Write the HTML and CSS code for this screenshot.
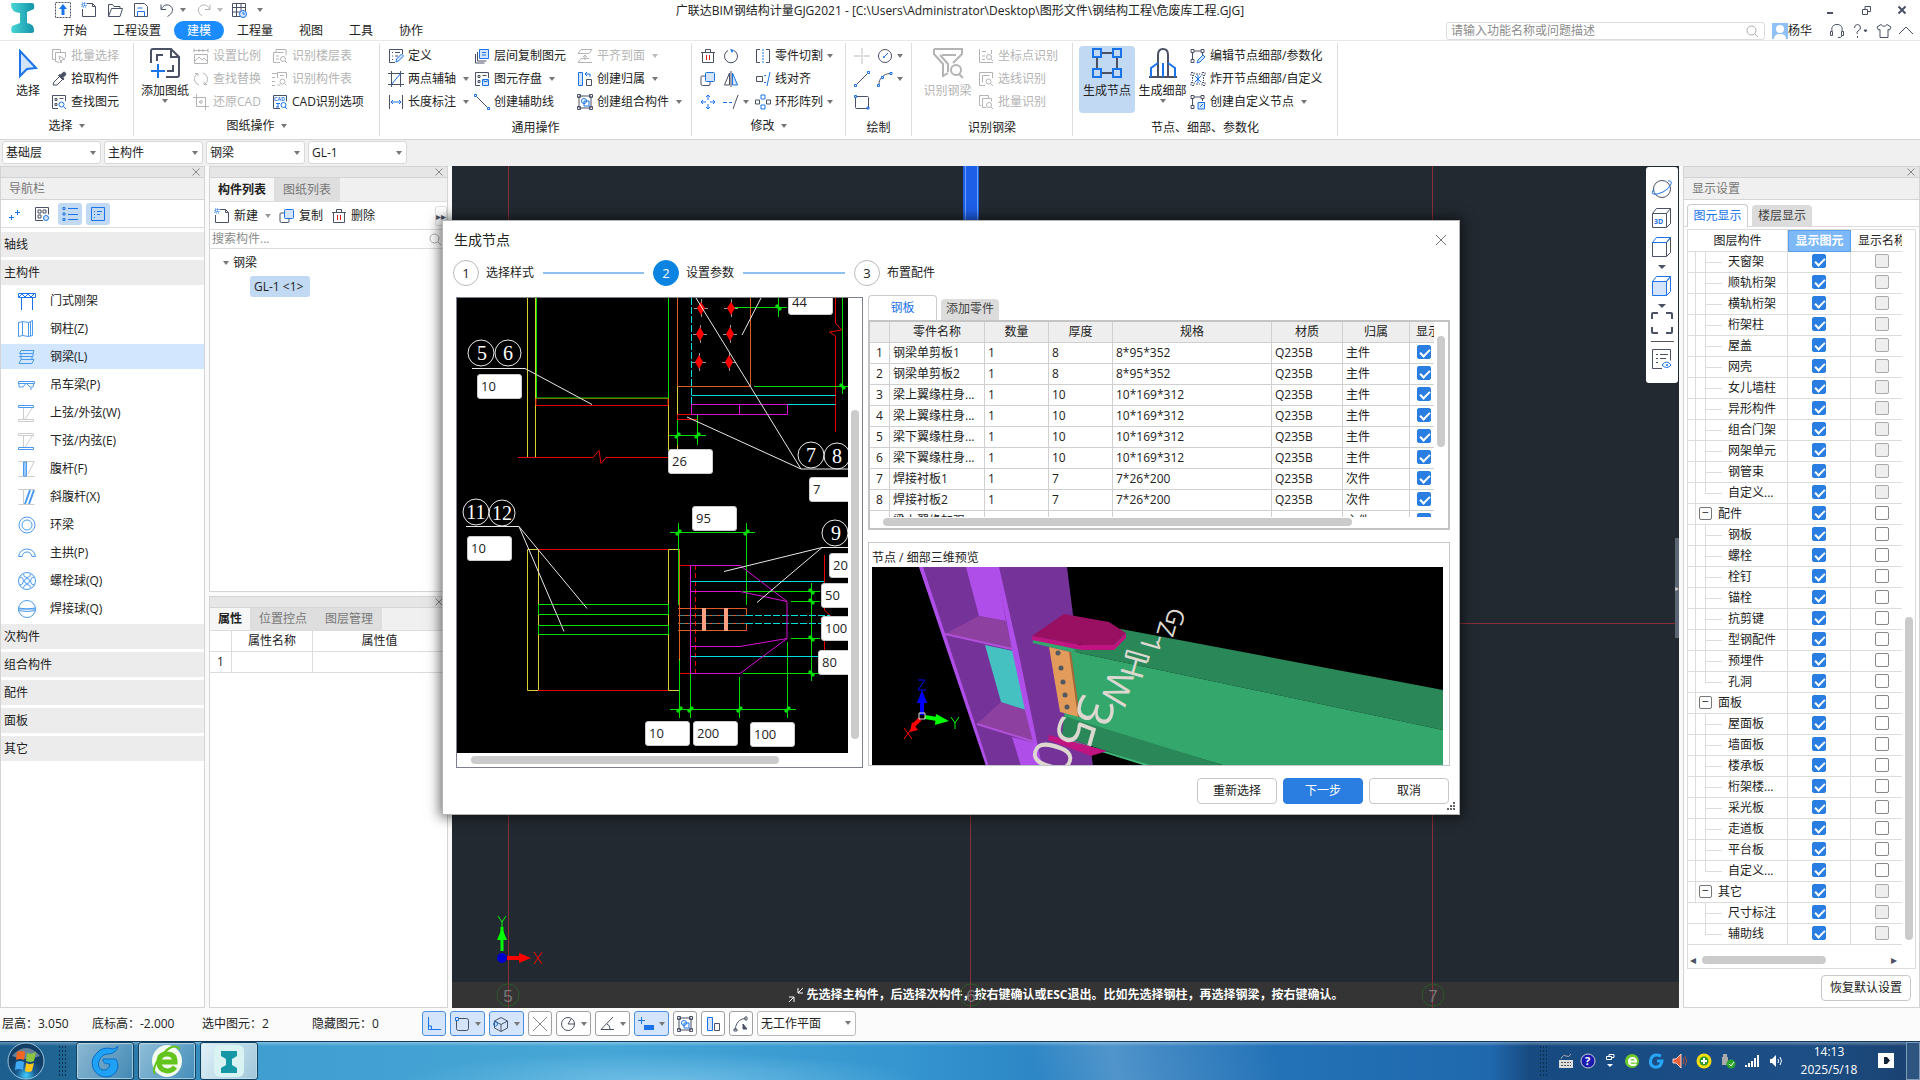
FILE: index.html
```html
<!DOCTYPE html>
<html lang="zh-CN">
<head>
<meta charset="utf-8">
<title>广联达BIM钢结构计量GJG2021</title>
<link rel="stylesheet" href="styles.css">
</head>
<body>
<svg class="sprite" aria-hidden="true">
<symbol id="up" viewBox="0 0 16 16"><path d="M.5.5h15v15H.5z" stroke-dasharray="2 1"/><path class="bs" d="M8 2l4 5H9.500v6h-3V7H4z"/></symbol>
<symbol id="new" viewBox="0 0 16 16"><path d="M6 1.500h5.500l3 3v10h-13V7"/><path d="M11.500 1.500v3h3"/><path class="b" d="M1 1h4v4H1zM1 3h4M3 1v4" stroke-dasharray="1 1"/></symbol>
<symbol id="open" viewBox="0 0 16 16"><path d="M1.500 14V2.500h4l1.500 2h6V7M1.500 14.500l3-8h11l-2.500 8z"/></symbol>
<symbol id="save" viewBox="0 0 16 16"><path d="M1.500 1.500h10l3 3v10h-13z"/><path class="b" d="M4.500 14.500v-5h7v5M4.500 6h5"/></symbol>
<symbol id="undo" viewBox="0 0 16 16"><path d="M2 2.500v5h5M2.500 7C4 3 9 1.500 12 4.500s1.500 7-3.500 10"/></symbol>
<symbol id="redo" viewBox="0 0 16 16"><path d="M14 2.500v5H9M13.500 7C12 3 7 1.500 4 4.500s-1.500 7 2 9.500"/></symbol>
<symbol id="grid" viewBox="0 0 16 16"><path d="M9 14.500H1.500v-13h13V9M1.500 5.500h13M1.500 10h8M5.500 1.500v13M10 1.500v8"/><circle class="b bf" cx="12" cy="12" r="3.500"/><path class="b" d="M12 10v2h2"/></symbol>
<symbol id="pointer" viewBox="0 0 32 32"><path class="b bf" stroke-width="2" d="M8 4l16 17-9 1-7 7z"/></symbol>
<symbol id="batch" viewBox="0 0 16 16"><path d="M4 11.500H1.500v-10h8V4M4.500 4.500h10v5M4.500 4.500v9l4 1"/><path d="M8 8l6 3-3 1-1 3z"/></symbol>
<symbol id="dropper" viewBox="0 0 16 16"><path d="M2 14l1-3 6-6 3 3-6 6z"/><path fill="currentColor" d="M7.500 4.500l4.500 4.500 1-1-1-1.500 2.500-2.500a1.800 1.800 0 0 0-2.500-2.500L9.500 4 8.500 3.500z"/></symbol>
<symbol id="find" viewBox="0 0 16 16"><path d="M7 14.500H1.500v-13h13V7M4 4.500h2v2H4zM4 9.500h2v2H4zM8.500 4.500h4"/><circle class="b" cx="10.500" cy="10.500" r="2.500"/><path class="b" d="M12.500 12.500l2.500 2.500"/></symbol>
<symbol id="sheet" viewBox="0 0 32 32"><g stroke-width="2"><path d="M2 16V4q0-2 2-2h18l8 8v18q0 2-2 2H17M22 2v8h8M8 14V8h6M24 18v6h-6"/><path class="b" d="M2 24h14M9 17v14"/></g></symbol>
<symbol id="ratio" viewBox="0 0 16 16"><path d="M1 .5v4M15 .5v4M1 2.500h14M6 1v3M10 1v3M1.500 6.500h13v9h-13zM2 13l4-4 3 3 2-2 3 3"/></symbol>
<symbol id="replace" viewBox="0 0 16 16"><path d="M6 14C1 12 0 6 4 3M2 2.500h3v3M10 2c5 2 6 8 2 11M14 13.500h-3v-3"/></symbol>
<symbol id="restore" viewBox="0 0 16 16"><path d="M3.500 0v12.500H16M0 3.500h12.500V16M9 6l-3 2 3 2M6 8h4"/></symbol>
<symbol id="tbl" viewBox="0 0 16 16"><path d="M4 4.500V1.500h10v6M1.500 4.500h10M1.500 4.500v10H8M4 8h3M4 11h3"/><circle cx="11" cy="11" r="2.500"/><path d="M13 13l2 2"/></symbol>
<symbol id="comp" viewBox="0 0 16 16"><path d="M0 2.500h5M0 6.500h3M0 10.500h3M0 14.500h3M5.500 7V1.500h9v6M5.500 14h3M8 4.500h4"/><circle cx="10.500" cy="10.500" r="2.500"/><path d="M12.500 12.500l2 2"/></symbol>
<symbol id="define" viewBox="0 0 16 16"><path d="M7 14.500H1.500v-13h13V6M4 4.500h1M7 4.500h5M4 8h1M7 8h3M4 11.500h1"/><path class="b bf" d="M8 14l.5-3 5-5 2 2-5 5z"/></symbol>
<symbol id="axis2" viewBox="0 0 16 16"><path d="M0 2.500h16M0 13.500h16M3.500 0v16M12.500 0v16"/><path class="b" d="M3.500 13.500l9-11"/></symbol>
<symbol id="length" viewBox="0 0 16 16"><path d="M1.500 1v14M14.500 1v14"/><path class="b" d="M3 8h10M5 6L3 8l2 2M11 6l2 2-2 2"/></symbol>
<symbol id="layer" viewBox="0 0 16 16"><path d="M3.500 4v9h9M1.500 6v9h9"/><path class="b bf" d="M5.500 1.500h9v9h-9zM8 4.500h4M8 7h4"/></symbol>
<symbol id="store" viewBox="0 0 16 16"><path d="M6 14.500H1.500v-13h13V7M4 4.500h2v2H4zM4 9.500h2v2H4zM8.500 4.500h4"/><path class="b bf" d="M8.500 8.500h6v6h-6zM10 8.500v2h3v-2"/></symbol>
<symbol id="aux" viewBox="0 0 16 16"><path class="b" d="M.5.5h2v2h-2zM13.500 13.500h2v2h-2z"/><path d="M3 3l10 10"/></symbol>
<symbol id="flat" viewBox="0 0 16 16"><path d="M4 1.500h11l-3 4H1zM1 14.500h14M1 14.500l3-4h8M8 12V7M6 9l2-2 2 2"/></symbol>
<symbol id="belong" viewBox="0 0 16 16"><path class="b bf" d="M1.500 1.500h4v13h-4z"/><path d="M9.500 8.500h5v6h-5z"/><path class="b" d="M13 6V3H8M10 1L8 3l2 2"/></symbol>
<symbol id="combo" viewBox="0 0 16 16"><path d="M2 2h12v12H2zM.5.5h3v3h-3zM12.500.5h3v3h-3zM.5 12.500h3v3h-3zM12.500 12.500h3v3h-3z"/><circle class="b" cx="7" cy="7" r="2.500"/><path class="b" d="M7 7h5v5H7z"/></symbol>
<symbol id="trash" viewBox="0 0 16 16"><path d="M1 4.500h14M5.500 4V1.500h5V4M2.500 5v9.500h11V5"/><path d="M6.500 7v5M9.500 7v5" stroke="#e02020"/></symbol>
<symbol id="rot" viewBox="0 0 16 16"><path d="M5 2.500A6.500 6.500 0 1 0 11 2.500"/><path class="bs" d="M7 1l4 1-2 3z"/></symbol>
<symbol id="copy" viewBox="0 0 16 16"><path d="M5 5H2q-1 0-1 1v7q0 1.500 1.500 1.500H9q1 0 1-1.500v-2"/><rect class="b bf" x="5.500" y="1.500" width="9" height="9" rx="1"/></symbol>
<symbol id="mirror" viewBox="0 0 16 16"><path class="b bf" d="M9.500 2l5 12h-5z"/><path d="M6.500 2l-5 12h5zM8 0v16"/></symbol>
<symbol id="move" viewBox="0 0 16 16"><path class="b" d="M8 1v5M8 10v5M1 8h5M10 8h5M6 3l2-2 2 2M6 13l2 2 2-2M3 6L1 8l2 2M13 6l2 2-2 2"/></symbol>
<symbol id="extend" viewBox="0 0 16 16"><path class="b" d="M0 8.500h4M6 8.500h3"/><path d="M15 1l-5 14"/></symbol>
<symbol id="cut" viewBox="0 0 16 16"><path d="M5 1.500H1.500v13H5M11 1.500h3.500v13H11"/><path class="b" d="M8 1v14" stroke-dasharray="2 1"/></symbol>
<symbol id="lalign" viewBox="0 0 16 16"><path d="M1.500 5.500h6v5h-6z"/><path class="b" d="M15 1l-3 14M9 4.500h2M9 11.500h2"/></symbol>
<symbol id="ring" viewBox="0 0 16 16"><path class="b" d="M6 1h4v4H6zM6 11h4v4H6z"/><path d="M.5 6h4v4h-4zM11.500 6h4v4h-4z"/></symbol>
<symbol id="point" viewBox="0 0 16 16"><path d="M8 0v6M8 10v6M0 8h6M10 8h6" stroke="#bbb"/><path d="M8 7v2" stroke="#888"/></symbol>
<symbol id="circ" viewBox="0 0 16 16"><circle cx="8" cy="8" r="6.500"/><path class="b" d="M7 9l4-4"/><circle class="bs" cx="7" cy="9" r="1"/></symbol>
<symbol id="line" viewBox="0 0 16 16"><path d="M3 13L13 3"/><path class="b" d="M.5 13.500h2v2h-2zM13.500.5h2v2h-2z"/></symbol>
<symbol id="arc" viewBox="0 0 16 16"><path d="M2 13C2 8 6 3 13 2.500"/><path class="b" d="M.5 13.500h2v2h-2zM4.500 5.500h2v2h-2zM13 1.500h2v2h-2z"/></symbol>
<symbol id="rect" viewBox="0 0 16 16"><rect x="1.500" y="2.500" width="13" height="12" rx="1"/><path class="b" d="M.5 1.500h2v2h-2zM13 13h2v2h-2z"/></symbol>
<symbol id="funnel" viewBox="0 0 32 32"><g stroke-width="2"><path d="M2 2h28v5l-9 9M2 2v5l9 10v12l5-3M8 8l8 9v8M10 8h14"/><circle cx="24" cy="23" r="5"/><path d="M27 27l4 4"/></g></symbol>
<symbol id="coord" viewBox="0 0 16 16"><path d="M1.500 1v13.500H15M4 3.500h4M4 8h3M4 11.500h3M13.500 2v4"/><circle cx="11" cy="9" r="2.500"/><path d="M13 11l2 2"/></symbol>
<symbol id="lsel" viewBox="0 0 16 16"><path d="M7 14.500H1.500v-13h13V7M4.500 11.500v-7h7"/><circle cx="10.500" cy="10.500" r="2.500"/><path d="M12.500 12.500l2.500 2.500"/></symbol>
<symbol id="brec" viewBox="0 0 16 16"><path d="M3 11.500H1.500v-10h9V4M4.500 4.500h9v3M4.500 4.500v9H8"/><circle cx="11" cy="11" r="2.500"/><path d="M13 13l2 2"/></symbol>
<symbol id="node" viewBox="0 0 32 32"><g stroke-width="2"><path d="M11 6h10M11 26h10M6 11v10M26 11v10"/><path class="b" d="M2 2h8v8H2zM22 2h8v8h-8zM2 22h8v8H2zM22 22h8v8h-8z"/></g></symbol>
<symbol id="detail" viewBox="0 0 32 32"><g stroke-width="2"><path d="M11 29V8q0-6 5-6t5 6v21M2 30h28"/><path class="b" d="M4 30V21l7-5M28 30V21l-7-5M16 16v14"/></g></symbol>
<symbol id="enode" viewBox="0 0 16 16"><path d="M1 1.500h3v3H1zM11 1.500h3v3h-3zM1 11.500h3v3H1zM4 3h7M2.500 5v6M12.500 5v2"/><path class="b bf" d="M7 15l1-3 5-5 2 2-5 5z"/></symbol>
<symbol id="explode" viewBox="0 0 16 16"><path d="M1 1.500h3v3H1zM12 1.500h3v3h-3zM1 11.500h3v3H1zM12 11.500h3v3h-3zM6 3h4M6 13h4M2.500 6v4M13.500 6v4" stroke-dasharray="2 1"/><path class="b" d="M5 5l6 6M11 5l-6 6M8 4v8"/></symbol>
<symbol id="cnode" viewBox="0 0 16 16"><path d="M1 1.500h3v3H1zM11 1.500h3v3h-3zM1 11.500h3v3H1zM4 3h7M2.500 5v6M12.500 5v2"/><path class="b bf" d="M8 8.500h6.500V15H8zM10 13l3-3"/></symbol>
<symbol id="close" viewBox="0 0 16 16"><path d="M4.500 4.500l7 7M11.500 4.500l-7 7"/></symbol>
<symbol id="mag" viewBox="0 0 16 16"><circle cx="7.500" cy="7.500" r="4.500"/><path d="M11 11l3 3"/></symbol>
<symbol id="cube" viewBox="0 0 22 22"><path d="M1.500 6.500h14v14h-14zM15.500 20.500l4-4V1.500l-4 5"/><path class="b" d="M1.500 6.500l4-5h14l-4 5z"/></symbol>
</svg>

<header class="top">
  <div class="quick">
    <svg class="logo" viewBox="0 0 26 32"><defs><linearGradient id="lg" x2="1"><stop offset="0" stop-color="#49d6d6"/><stop offset="1" stop-color="#1292a8"/></linearGradient></defs><path fill="url(#lg)" d="M2 1h20q3 0 2 6l-7 3v11q8 1 7 9-1 1-3 1H3q-3-1-1-7l8-3V11Q1 10 1 3 1 1 2 1z"/></svg>
    <button aria-label="上传"><svg class="i"><use href="#up"/></svg></button>
    <button aria-label="新建文件"><svg class="i"><use href="#new"/></svg></button>
    <button aria-label="打开"><svg class="i"><use href="#open"/></svg></button>
    <button aria-label="保存"><svg class="i"><use href="#save"/></svg></button>
    <button class="dd" aria-label="撤销"><svg class="i"><use href="#undo"/></svg></button>
    <button class="dd off" aria-label="重做"><svg class="i"><use href="#redo"/></svg></button>
    <button class="dd last" aria-label="表格"><svg class="i"><use href="#grid"/></svg></button>
  </div>
  <h1>广联达BIM钢结构计量GJG2021 - [C:\Users\Administrator\Desktop\图形文件\钢结构工程\危废库工程.GJG]</h1>
  <div class="winbtns">
    <button aria-label="最小化"><svg class="i" viewBox="0 0 16 16"><path d="M5 11h6" stroke-width="2"/></svg></button>
    <button aria-label="还原"><svg class="i" viewBox="0 0 16 16"><path d="M4.500 7.500h5v5h-5zM7 7V4.500h5.500v5H10"/></svg></button>
    <button aria-label="关闭"><svg class="i" viewBox="0 0 16 16"><path d="M4.500 4.500l7 7M11.500 4.500l-7 7" stroke-width="2"/></svg></button>
  </div>
  <nav class="tabs"><button>开始</button><button>工程设置</button><button class="on">建模</button><button>工程量</button><button>视图</button><button>工具</button><button>协作</button></nav>
  <div class="user">
    <label class="search"><input type="text" aria-label="搜索功能" placeholder="请输入功能名称或问题描述"><svg class="i"><use href="#mag"/></svg></label>
    <svg class="avatar" viewBox="0 0 16 16"><rect width="16" height="16" fill="#8fc1f7"/><circle cx="8" cy="6" r="4" fill="#fff"/><path d="M2 16q0-5 6-5t6 5z" fill="#fff"/></svg><span>杨华</span>
    <svg class="i hs" viewBox="0 0 16 16"><path d="M3 8C2 3 5 1.500 8 1.500S14 3 13 8M1.500 8.500h2v4h-2zM12.500 8.500h2v4h-2zM13 13q-1 2-4 1.500"/></svg>
    <svg class="i hp" viewBox="0 0 16 16"><path d="M1.500 5Q1.500 1.500 4.500 1.500T7.500 5Q7 7 5 8t-.5 3M4.500 13v2"/><path fill="currentColor" d="M11 7h3l-1.500 2z"/></svg>
    <svg class="i sh" viewBox="0 0 16 16"><path d="M5 1.500L1 4l1.500 3L4 6.500v8h8v-8l1.500.5L15 4l-4-2.500Q8 5 5 1.500z"/></svg>
    <svg class="i" viewBox="0 0 16 16"><path d="M1 11l7-7 7 7"/></svg>
  </div>
</header>

<div class="ribbon">
  <section class="group g1"><div class="body">
    <button class="big"><svg class="ii"><use href="#pointer"/></svg>选择</button>
    <div class="col"><button class="tool off"><svg class="i"><use href="#batch"/></svg>批量选择</button><button class="tool"><svg class="i"><use href="#dropper"/></svg>拾取构件</button><button class="tool"><svg class="i"><use href="#find"/></svg>查找图元</button></div>
  </div><h2 class="dd">选择</h2></section>
  <section class="group g2"><div class="body">
    <button class="big more"><svg class="ii"><use href="#sheet"/></svg>添加图纸</button>
    <div class="col off"><button class="tool"><svg class="i"><use href="#ratio"/></svg>设置比例</button><button class="tool"><svg class="i"><use href="#replace"/></svg>查找替换</button><button class="tool"><svg class="i"><use href="#restore"/></svg>还原CAD</button></div>
    <div class="col"><button class="tool off"><svg class="i"><use href="#tbl"/></svg>识别楼层表</button><button class="tool off"><svg class="i"><use href="#comp"/></svg>识别构件表</button><button class="tool"><svg class="i" viewBox="0 0 16 16"><path d="M1.500 1.500h13v6M1.500 1.500v13H8"/><text class="tiny" x="2" y="7">CAD</text><path class="b" d="M4 9.500h4M6 9.500V13M4 13h3"/><circle class="b" cx="11.500" cy="11" r="2.500"/><path class="b" d="M13 13l2 2"/></svg>CAD识别选项</button></div>
  </div><h2 class="dd">图纸操作</h2></section>
  <section class="group g3"><div class="body">
    <div class="col"><button class="tool"><svg class="i"><use href="#define"/></svg>定义</button><button class="tool dd"><svg class="i"><use href="#axis2"/></svg>两点辅轴</button><button class="tool dd"><svg class="i"><use href="#length"/></svg>长度标注</button></div>
    <div class="col"><button class="tool"><svg class="i"><use href="#layer"/></svg>层间复制图元</button><button class="tool dd"><svg class="i"><use href="#store"/></svg>图元存盘</button><button class="tool"><svg class="i"><use href="#aux"/></svg>创建辅助线</button></div>
    <div class="col"><button class="tool dd off"><svg class="i"><use href="#flat"/></svg>平齐到面</button><button class="tool dd"><svg class="i"><use href="#belong"/></svg>创建归属</button><button class="tool dd"><svg class="i"><use href="#combo"/></svg>创建组合构件</button></div>
  </div><h2>通用操作</h2></section>
  <section class="group g4"><div class="body">
    <div class="col"><button class="tool" aria-label="删除"><svg class="i"><use href="#trash"/></svg></button><button class="tool" aria-label="复制"><svg class="i"><use href="#copy"/></svg></button><button class="tool" aria-label="移动"><svg class="i"><use href="#move"/></svg></button></div>
    <div class="col"><button class="tool" aria-label="旋转"><svg class="i"><use href="#rot"/></svg></button><button class="tool" aria-label="镜像"><svg class="i"><use href="#mirror"/></svg></button><button class="tool dd" aria-label="延伸"><svg class="i"><use href="#extend"/></svg></button></div>
    <div class="col"><button class="tool dd"><svg class="i"><use href="#cut"/></svg>零件切割</button><button class="tool"><svg class="i"><use href="#lalign"/></svg>线对齐</button><button class="tool dd"><svg class="i"><use href="#ring"/></svg>环形阵列</button></div>
  </div><h2 class="dd">修改</h2></section>
  <section class="group g5"><div class="body">
    <div class="col"><button class="tool" aria-label="点"><svg class="i"><use href="#point"/></svg></button><button class="tool" aria-label="直线"><svg class="i"><use href="#line"/></svg></button><button class="tool" aria-label="矩形"><svg class="i"><use href="#rect"/></svg></button></div>
    <div class="col"><button class="tool dd" aria-label="圆"><svg class="i"><use href="#circ"/></svg></button><button class="tool dd" aria-label="弧"><svg class="i"><use href="#arc"/></svg></button></div>
  </div><h2>绘制</h2></section>
  <section class="group g6"><div class="body off">
    <button class="big"><svg class="ii"><use href="#funnel"/></svg>识别钢梁</button>
    <div class="col"><button class="tool"><svg class="i"><use href="#coord"/></svg>坐标点识别</button><button class="tool"><svg class="i"><use href="#lsel"/></svg>选线识别</button><button class="tool"><svg class="i"><use href="#brec"/></svg>批量识别</button></div>
  </div><h2>识别钢梁</h2></section>
  <section class="group g7"><div class="body">
    <button class="big on"><svg class="ii"><use href="#node"/></svg>生成节点</button>
    <button class="big more"><svg class="ii"><use href="#detail"/></svg>生成细部</button>
    <div class="col"><button class="tool"><svg class="i"><use href="#enode"/></svg>编辑节点细部/参数化</button><button class="tool"><svg class="i"><use href="#explode"/></svg>炸开节点细部/自定义</button><button class="tool dd"><svg class="i"><use href="#cnode"/></svg>创建自定义节点</button></div>
  </div><h2>节点、细部、参数化</h2></section>
</div>

<div class="filters">
  <span class="pick"><select aria-label="楼层"><option>基础层</option></select></span>
  <span class="pick"><select aria-label="构件大类"><option>主构件</option></select></span>
  <span class="pick"><select aria-label="构件类型"><option>钢梁</option></select></span>
  <span class="pick"><select aria-label="构件"><option>GL-1</option></select></span>
</div>

<main class="work">
  <aside class="panel nav">
    <div class="grip"><svg class="i"><use href="#close"/></svg></div>
    <h3>导航栏</h3>
    <div class="navbar">
      <button aria-label="添加"><svg class="i" viewBox="0 0 16 16"><path class="b" d="M3 11.500h5M5.500 9v5M9 6.500h5M11.500 4v5"/></svg></button>
      <button aria-label="布局"><svg class="i" viewBox="0 0 16 16"><path d="M1.500 1.500h13v7M1.500 1.500v13H9M4 4h3v3H4zM9 4h3v3H9zM4 9h3v3H4z"/><circle class="b bf" cx="12" cy="12" r="2.500"/></svg></button>
      <button class="on" aria-label="列表"><svg class="i" viewBox="0 0 16 16"><path class="b" d="M1 1.500h2v2H1zM1 7h2v2H1zM1 12.500h2v2H1zM6 2.500h10M6 8.500h10M6 13.500h10"/></svg></button>
      <button class="on" aria-label="详情"><svg class="i" viewBox="0 0 16 16"><path class="b" d="M1.500 1.500h13v13h-13zM4 5.500h1M7 5.500h5M4 8.500h1M7 8.500h3M4 11.500h1"/></svg></button>
    </div>
    <ul class="types">
      <li class="cat">轴线</li><li class="cat">主构件</li>
      <li><svg class="n" viewBox="0 0 18 18"><path class="d" d="M.5 1.500h17v4H.5zM1 5l3-3 3 3 3-3 3 3 3-3M3.500 6v12M14.500 6v12"/></svg>门式刚架</li>
      <li><svg class="n" viewBox="0 0 18 18"><path d="M.5 2.500l4-1v14l-4 1zM4.500 1.500l6 1v14l-6-1M10.500 2.500l4-2v15l-4 1M12.500 2v14"/></svg>钢柱(Z)</li>
      <li class="on"><svg class="n" viewBox="0 0 18 18"><path d="M3 2.500h13l-1 3H1.500zM3 5.500v6M1 8.500h14V5M3 11.500l-2 4h13l2-4zM14 8.500v3"/></svg>钢梁(L)</li>
      <li><svg class="n" viewBox="0 0 18 18"><path d="M.5 5.500h16v2H.5zM1 7v4h4l3-4 4 4h3l1-4M12 13h2"/></svg>吊车梁(P)</li>
      <li><svg class="n" viewBox="0 0 18 18"><path class="g" d="M.5 15.500h15v2H.5zM5.500 3v12M7 15l8-12"/><path d="M.5 1.500h15v2H.5z"/></svg>上弦/外弦(W)</li>
      <li><svg class="n" viewBox="0 0 18 18"><path class="g" d="M.5 1.500h15v2H.5zM5.500 3v12M7 15l8-12"/><path d="M.5 15.500h15v2H.5z"/></svg>下弦/内弦(E)</li>
      <li><svg class="n" viewBox="0 0 18 18"><path class="g" d="M.5 1.500h16M.5 16.500h16M10 14l6-12"/><path fill="#9cc8fa" d="M5.500 2v14h3V2z"/></svg>腹杆(F)</li>
      <li><svg class="n" viewBox="0 0 18 18"><path class="g" d="M.5 1.500h16M.5 16.500h16M5.500 2v14"/><path d="M7 16l5-14M11 16l5-14" stroke-width="2"/></svg>斜腹杆(X)</li>
      <li><svg class="n" viewBox="0 0 18 18"><circle cx="9" cy="9" r="8"/><circle cx="9" cy="9" r="5"/></svg>环梁</li>
      <li><svg class="n" viewBox="0 0 18 18"><path d="M.5 12.500Q2 5 9 5t8.500 7.500H14Q13 8 9 8t-5 4.500z"/></svg>主拱(P)</li>
      <li><svg class="n" viewBox="0 0 18 18"><circle cx="9" cy="9" r="8.500"/><circle cx="9" cy="9" r="2.500"/><path d="M5.500 2a3.500 3.500 0 0 0 7 0M5.500 16a3.500 3.500 0 0 1 7 0M1.500 5a3 3 0 1 1 0 8M16.500 5a3 3 0 1 0 0 8"/></svg>螺栓球(Q)</li>
      <li><svg class="n" viewBox="0 0 18 18"><circle cx="9" cy="9" r="8.500"/><path d="M.5 8q8.500 2 17 0M.5 10.500q8.500 2 17 0M0 9h18"/></svg>焊接球(Q)</li>
      <li class="cat">次构件</li><li class="cat">组合构件</li><li class="cat">配件</li><li class="cat">面板</li><li class="cat">其它</li>
    </ul>
  </aside>

  <div class="side">
    <section class="panel list">
      <div class="grip"><svg class="i"><use href="#close"/></svg></div>
      <div class="subtabs"><button class="on">构件列表</button><button>图纸列表</button></div>
      <div class="bar"><button class="tool dd"><svg class="i"><use href="#new"/></svg>新建</button><button class="tool"><svg class="i"><use href="#copy"/></svg>复制</button><button class="tool"><svg class="i"><use href="#trash"/></svg>删除</button><span class="over">▸▸</span></div>
      <label class="lookup"><input type="text" aria-label="搜索构件" placeholder="搜索构件..."><svg class="i"><use href="#mag"/></svg></label>
      <ul class="tree"><li><span class="parent">钢梁</span><ul><li><span class="chip">GL-1 &lt;1&gt;</span></li></ul></li></ul>
    </section>
    <section class="panel props">
      <div class="grip"><svg class="i"><use href="#close"/></svg></div>
      <div class="subtabs"><button class="on">属性</button><button>位置控点</button><button>图层管理</button></div>
      <table class="ptable"><thead><tr><th></th><th>属性名称</th><th>属性值</th></tr></thead><tbody><tr><td>1</td><td></td><td></td></tr></tbody></table>
    </section>
  </div>

  <section class="view">
    <p class="hint"><svg class="i" viewBox="0 0 16 16"><path d="M15 1l-5 5M10 1v5h5M1 15l5-5M1 10h5v5"/></svg>先选择主构件，后选择次构件，按右键确认或ESC退出。比如先选择钢柱，再选择钢梁，按右键确认。</p>
    <svg class="axes" viewBox="0 0 1227 842" preserveAspectRatio="xMinYMax slice">
      <path d="M56.500 0v842M518.500 0v842M980.500 0v842M0 457.500h1227" stroke="#8a2f3a"/>
      <path d="M511 0h16v60h-16z" fill="#1e5fe8"/><path d="M513.500 0v60M525.500 0v60" stroke="#6aa0ff"/>
      <g stroke="#2c5a2c"><circle cx="56" cy="829" r="11"/><circle cx="519" cy="829" r="11"/><circle cx="981" cy="829" r="11"/></g>
      <g class="num"><text x="56" y="836">5</text><text x="519" y="836">6</text><text x="981" y="836">7</text></g>
      <path d="M50 785v-24" stroke="#0f0" stroke-width="3"/><path d="M45 774l5-12 5 12z" fill="#0f0"/>
      <path d="M55 792h12" stroke="red" stroke-width="4"/><path d="M67 787l12 5-12 5z" fill="red"/>
      <circle cx="50" cy="792" r="5" fill="#00c"/>
      <path d="M46 750l4 6 4-6M50 756v6" stroke="#0f0"/><path d="M82 786l8 12M90 786l-8 12" stroke="red"/>
    </svg>
    <div class="strip">
      <svg viewBox="0 0 22 22"><circle cx="11" cy="11" r="8.500"/><path class="b" d="M17 3q4-1 3 3-2 5-8 8t-10 2q-2-1 1-5"/></svg>
      <svg viewBox="0 0 22 22"><path d="M1.500 6.500h14v14h-14zM1.500 6.500l4-5h14l-4 5M15.500 20.500l4-4v-15"/><text class="td" x="3" y="17">3D</text></svg>
      <svg><use href="#cube"/></svg><i></i>
      <svg class="blue"><use href="#cube"/></svg><i></i>
      <svg class="wide" viewBox="0 0 24 24"><path stroke-width="2" d="M2 8V3q0-1 1-1h5M16 2h5q1 0 1 1v5M22 16v5q0 1-1 1h-5M8 22H3q-1 0-1-1v-5"/></svg>
      <hr>
      <svg viewBox="0 0 22 22"><path d="M11 20.500H1.500v-19h18v11M5 6.500h2M9 6.500h8M5 10.500h2M9 10.500h6M5 14.500h2"/><path class="b" d="M11 17q5-6 9 0-4 5-9 0z"/><circle class="bs" cx="16" cy="17" r="1"/></svg>
    </div>
    <span class="split">▸</span>
  </section>

  <aside class="panel display">
    <div class="grip"><svg class="i"><use href="#close"/></svg></div>
    <h3>显示设置</h3>
    <div class="cards"><button class="on">图元显示</button><button>楼层显示</button></div>
    <div class="frame">
      <div class="clip">
      <table class="dtable">
        <thead><tr><th>图层构件</th><th class="hl">显示图元</th><th>显示名称</th></tr></thead>
        <tbody>
        <tr><td>天窗架</td><td><input type="checkbox" aria-label="天窗架 图元" checked></td><td><input type="checkbox" aria-label="天窗架 名称" disabled></td></tr>
        <tr><td>顺轨桁架</td><td><input type="checkbox" aria-label="顺轨桁架 图元" checked></td><td><input type="checkbox" aria-label="顺轨桁架 名称" disabled></td></tr>
        <tr><td>横轨桁架</td><td><input type="checkbox" aria-label="横轨桁架 图元" checked></td><td><input type="checkbox" aria-label="横轨桁架 名称" disabled></td></tr>
        <tr><td>桁架柱</td><td><input type="checkbox" aria-label="桁架柱 图元" checked></td><td><input type="checkbox" aria-label="桁架柱 名称" disabled></td></tr>
        <tr><td>屋盖</td><td><input type="checkbox" aria-label="屋盖 图元" checked></td><td><input type="checkbox" aria-label="屋盖 名称" disabled></td></tr>
        <tr><td>网壳</td><td><input type="checkbox" aria-label="网壳 图元" checked></td><td><input type="checkbox" aria-label="网壳 名称" disabled></td></tr>
        <tr><td>女儿墙柱</td><td><input type="checkbox" aria-label="女儿墙柱 图元" checked></td><td><input type="checkbox" aria-label="女儿墙柱 名称" disabled></td></tr>
        <tr><td>异形构件</td><td><input type="checkbox" aria-label="异形构件 图元" checked></td><td><input type="checkbox" aria-label="异形构件 名称" disabled></td></tr>
        <tr><td>组合门架</td><td><input type="checkbox" aria-label="组合门架 图元" checked></td><td><input type="checkbox" aria-label="组合门架 名称" disabled></td></tr>
        <tr><td>网架单元</td><td><input type="checkbox" aria-label="网架单元 图元" checked></td><td><input type="checkbox" aria-label="网架单元 名称" disabled></td></tr>
        <tr><td>钢管束</td><td><input type="checkbox" aria-label="钢管束 图元" checked></td><td><input type="checkbox" aria-label="钢管束 名称" disabled></td></tr>
        <tr class="last"><td>自定义...</td><td><input type="checkbox" aria-label="自定义构件 图元" checked></td><td><input type="checkbox" aria-label="自定义构件 名称" disabled></td></tr>
        <tr class="head"><td><button>−</button>配件</td><td><input type="checkbox" aria-label="配件 图元" checked></td><td><input type="checkbox" aria-label="配件 名称"></td></tr>
        <tr><td>钢板</td><td><input type="checkbox" aria-label="钢板 图元" checked></td><td><input type="checkbox" aria-label="钢板 名称"></td></tr>
        <tr><td>螺栓</td><td><input type="checkbox" aria-label="螺栓 图元" checked></td><td><input type="checkbox" aria-label="螺栓 名称"></td></tr>
        <tr><td>栓钉</td><td><input type="checkbox" aria-label="栓钉 图元" checked></td><td><input type="checkbox" aria-label="栓钉 名称"></td></tr>
        <tr><td>锚栓</td><td><input type="checkbox" aria-label="锚栓 图元" checked></td><td><input type="checkbox" aria-label="锚栓 名称"></td></tr>
        <tr><td>抗剪键</td><td><input type="checkbox" aria-label="抗剪键 图元" checked></td><td><input type="checkbox" aria-label="抗剪键 名称"></td></tr>
        <tr><td>型钢配件</td><td><input type="checkbox" aria-label="型钢配件 图元" checked></td><td><input type="checkbox" aria-label="型钢配件 名称"></td></tr>
        <tr><td>预埋件</td><td><input type="checkbox" aria-label="预埋件 图元" checked></td><td><input type="checkbox" aria-label="预埋件 名称"></td></tr>
        <tr class="last"><td>孔洞</td><td><input type="checkbox" aria-label="孔洞 图元" checked></td><td><input type="checkbox" aria-label="孔洞 名称"></td></tr>
        <tr class="head"><td><button>−</button>面板</td><td><input type="checkbox" aria-label="面板 图元" checked></td><td><input type="checkbox" aria-label="面板 名称"></td></tr>
        <tr><td>屋面板</td><td><input type="checkbox" aria-label="屋面板 图元" checked></td><td><input type="checkbox" aria-label="屋面板 名称"></td></tr>
        <tr><td>墙面板</td><td><input type="checkbox" aria-label="墙面板 图元" checked></td><td><input type="checkbox" aria-label="墙面板 名称"></td></tr>
        <tr><td>楼承板</td><td><input type="checkbox" aria-label="楼承板 图元" checked></td><td><input type="checkbox" aria-label="楼承板 名称"></td></tr>
        <tr><td>桁架楼...</td><td><input type="checkbox" aria-label="桁架楼承板 图元" checked></td><td><input type="checkbox" aria-label="桁架楼承板 名称"></td></tr>
        <tr><td>采光板</td><td><input type="checkbox" aria-label="采光板 图元" checked></td><td><input type="checkbox" aria-label="采光板 名称"></td></tr>
        <tr><td>走道板</td><td><input type="checkbox" aria-label="走道板 图元" checked></td><td><input type="checkbox" aria-label="走道板 名称"></td></tr>
        <tr><td>平台板</td><td><input type="checkbox" aria-label="平台板 图元" checked></td><td><input type="checkbox" aria-label="平台板 名称"></td></tr>
        <tr class="last"><td>自定义...</td><td><input type="checkbox" aria-label="自定义面板 图元" checked></td><td><input type="checkbox" aria-label="自定义面板 名称"></td></tr>
        <tr class="head"><td><button>−</button>其它</td><td><input type="checkbox" aria-label="其它 图元" checked></td><td><input type="checkbox" aria-label="其它 名称" disabled></td></tr>
        <tr class="tail"><td>尺寸标注</td><td><input type="checkbox" aria-label="尺寸标注 图元" checked></td><td><input type="checkbox" aria-label="尺寸标注 名称" disabled></td></tr>
        <tr class="last tail"><td>辅助线</td><td><input type="checkbox" aria-label="辅助线 图元" checked></td><td><input type="checkbox" aria-label="辅助线 名称" disabled></td></tr>
        </tbody>
      </table>
      </div>
      <div class="vbar"><b></b></div>
      <div class="hbar"><span>◂</span><b></b><span>▸</span></div>
    </div>
    <button class="btn reset">恢复默认设置</button>
  </aside>
</main>

<footer class="status">
  <span class="s1">层高：3.050</span><span class="s2">底标高：-2.000</span><span class="s3">选中图元：2</span><span class="s4">隐藏图元：0</span>
  <div class="snaps">
    <button class="on" aria-label="正交"><svg class="i" viewBox="0 0 16 16"><path class="b" d="M2.500 1v12.500H15M2.500 10h3v3"/></svg></button>
    <button class="on dd" aria-label="框选"><svg class="i" viewBox="0 0 16 16"><rect x="2.500" y="2.500" width="12" height="12" rx="2"/><path class="b bf" d="M1.500 1.500h3v3h-3z"/></svg></button>
    <button class="on dd" aria-label="三维"><svg class="i" viewBox="0 0 16 16"><path d="M8 1.500l6.500 3.500v7L8 15.500 1.500 12V5zM1.500 5L8 8.500 14.500 5M8 8.500v7"/><circle class="b" cx="2.500" cy="8" r="2"/></svg></button>
    <button aria-label="交点"><svg class="i" viewBox="0 0 16 16"><path stroke="#888" d="M1 1l14 14M15 1L1 15"/></svg></button>
    <button class="dd" aria-label="圆心"><svg class="i" viewBox="0 0 16 16"><circle cx="8" cy="8" r="6.500"/><path d="M8 8h7M8 8l3-5"/></svg></button>
    <button class="dd" aria-label="角度"><svg class="i" viewBox="0 0 16 16"><path d="M14 1L2 13.500h13M8 8q3 1 3 5"/></svg></button>
    <button class="on dd" aria-label="动态输入"><svg class="i" viewBox="0 0 16 16"><path class="b" d="M0 4.500h7M3.500 1v7"/><path class="bs" d="M6 9h10v5H6z"/></svg></button>
    <button aria-label="组合"><svg class="i"><use href="#combo"/></svg></button>
    <button aria-label="归属"><svg class="i" viewBox="0 0 16 16"><path class="b bf" d="M2.500 1.500h5v13h-5z"/><path d="M9.500 7.500h5v7h-5z"/></svg></button>
    <button aria-label="弧线"><svg class="i" viewBox="0 0 16 16"><path d="M2 14C3 7 6 3 12 2.500M1 13h3v2H1zM12 1h2v3h-2z"/><path fill="currentColor" d="M10 8l4 5h-4z"/></svg></button>
  </div>
  <span class="pick"><select aria-label="工作平面"><option>无工作平面</option></select></span>
</footer>

<div class="taskbar">
  <button class="orb" aria-label="开始菜单"><svg viewBox="0 0 38 38"><defs><radialGradient id="ob" cy=".9"><stop offset="0" stop-color="#3fd0ff"/><stop offset=".5" stop-color="#1a5d94"/><stop offset="1" stop-color="#123e66"/></radialGradient></defs><circle cx="19" cy="19" r="18" fill="url(#ob)" stroke="#9cc4dc"/><path d="M5 14Q19 -2 33 14 19 20 5 14z" fill="#fff" opacity=".35"/><path d="M10 10q5-2 8 0l-1 8q-4-2-8 0z" fill="#f26522"/><path d="M20 11q4 2 9-1l-2 9q-4 2-8 0z" fill="#8cc63f"/><path d="M9 20q4-2 8 0l-1 8q-4-2-8 0z" fill="#3fa9f5"/><path d="M19 21q4 2 8 0l-2 8q-4 2-7 0z" fill="#fcc61a"/></svg></button>
  <span class="dots"></span>
  <button class="task" aria-label="广联达"><svg viewBox="0 0 32 34"><path d="M29 2Q26 5 24 5 13 2 8 9 1 15 4 24q4 9 14 9 9-1 11-10 0-5-2-8H14q-1 5 7 5-1 7-8 6-5-3-3-9 3-7 9-7 8 0 10-8z" fill="#1fa2f5" stroke="#0a6cc4"/></svg></button>
  <button class="task" aria-label="浏览器"><svg viewBox="0 0 32 34"><ellipse cx="16" cy="17" rx="15" ry="16" fill="#f4fbef"/><path d="M8 18h16q0-8-8-8t-8 8 8 9q5 0 8-4" stroke="#62c41c" stroke-width="5"/><path d="M4 30Q0 24 11 11T29 5" stroke="#62c41c" stroke-width="2"/></svg></button>
  <button class="task on" aria-label="钢结构计量"><svg viewBox="0 0 32 34"><rect x="1" y="1" width="30" height="32" rx="6" fill="#d9f3f3"/><path d="M8 7h16v5l-5 3v6l5 3v5H8v-5l5-3v-6l-5-3z" fill="#1597a5"/></svg></button>
  <div class="tray">
    <span class="dots"></span>
    <svg viewBox="0 0 16 16"><path d="M1 7h14v8H1z" fill="#ddd"/><path d="M3 9.500h10M3 12.500h10" stroke="#555" stroke-dasharray="2 1"/><path d="M3 6q2-5 5-3t5-2" stroke="#aaa"/></svg>
    <svg class="near" viewBox="0 0 16 16"><circle cx="8" cy="8" r="7" fill="#1a1ab0" stroke="#ccc"/><text class="q" x="5" y="12">?</text></svg>
    <svg class="near" viewBox="0 0 16 16"><path d="M4.500 3.500h5v3h-5zM7 3V1.500h5v3h-2" stroke="#fff"/><path d="M5 11h6l-3 3z" fill="#fff"/></svg>
    <svg class="near" viewBox="0 0 16 16"><circle cx="8" cy="8" r="7" fill="#6cc82c"/><path d="M5 8.500h7Q12 5 8.500 5 5 5 5 8.500T9 12q2 0 3-1" stroke="#fff" stroke-width="2"/></svg>
    <svg viewBox="0 0 16 16"><path d="M13 3Q5 0 3 6t3 8q7 1 8-6H9" stroke="#27a5f7" stroke-width="3"/></svg>
    <svg viewBox="0 0 16 16"><path d="M1 6h3l5-5v14l-5-5H1z" fill="#e8603c" stroke="#ffd0c0"/><path d="M11 5q2 3 0 6M13 3q3 5 0 10" stroke="#b0523c"/></svg>
    <svg viewBox="0 0 16 16"><circle cx="8" cy="8" r="7.500" fill="#f6dc10"/><circle cx="8" cy="8" r="4.500" fill="#2a9a2a"/><path d="M8 5v6M5 8h6" stroke="#fff" stroke-width="2"/></svg>
    <svg viewBox="0 0 16 16"><path d="M3 1h4v3H3zM2 4h6v8H2z" fill="#aaa"/><circle cx="11" cy="11" r="4.500" fill="#2ba52b"/><path d="M9 11l2 2 3-4" stroke="#fff"/></svg>
    <svg viewBox="0 0 16 16"><path d="M2 12v2M5 10v4M8 8v6M11 5v9M14 2v12" stroke="#fff" stroke-width="2"/></svg>
    <svg viewBox="0 0 16 16"><path d="M2 6h2l4-4v12l-4-4H2z" fill="#fff"/><path d="M10 6q1 2 0 4M12 4q3 4 0 8" stroke="#fff"/></svg>
    <time>14:13<br>2025/5/18</time>
    <svg viewBox="0 0 16 16"><path d="M0 0h16v15H0z" fill="#fff"/><path d="M6 4h3l3 3.500L9 11H6z" fill="#123"/></svg>
    <span class="peek"></span>
  </div>
</div>

<div class="dialog" role="dialog" aria-label="生成节点">
  <div class="dtitle"><span>生成节点</span><button aria-label="关闭对话框"><svg class="i" viewBox="0 0 16 16"><path d="M3 3l10 10M13 3L3 13"/></svg></button></div>
  <ol class="steps"><li><b>1</b>选择样式</li><li class="on"><b>2</b>设置参数</li><li><b>3</b>布置配件</li></ol>
  <div class="cols">
    <div class="cadbox">
      <div class="cad">
        <svg viewBox="457 298 391 455">
          <g stroke="#dcd030"><path d="M527.500 298v159M535.500 298v159M668.500 398v52M677.500 386v64M527.500 549.500h11v141h-11zM668.500 549.500h11v141h-11z"/></g>
          <g stroke="#e00"><path d="M536 398.500h132v7H536zM518 457.500h75l6-7 2 13 5-6h62M677.500 414.500h20v5h-20zM835.500 298v25l6 7-12 2 6 4v96M538 549.500h130M538 690.500h130M679 565.500h12M679 673.500h12M824.500 555v55l6 6-10 3 4 4v52"/><path d="M695.500 565v108" stroke-dasharray="5 3"/></g>
          <g stroke="#0d0"><path d="M536.500 298v100h132V298M677.500 420v25M697.500 414v31M669 435.500h37M733 307.500h54M778.500 298v19M754 386.500h94M842.500 298v96M538.500 604.500h130v10h-130zM538.500 625.500h130v9h-130zM670 532.500h85M678.500 523v82M746.500 523v82M811.500 583v98M743 591.500h77M791 601.500h29M791 638.500h29M743 673.500h77M670 709.500h126M679.500 660v58M690.500 660v58M739.500 677v41M787.500 642v76"/>
          <path stroke-width="3" d="M675 438l5-5M695 438l5-5M776 305l5 5M840 384l5 5M676 535l5-5M744 535l5-5M809 589l5 5M809 599l5 5M809 636l5 5M809 671l5 5M677 712l5-5M688 712l5-5M737 712l5-5M785 712l5-5"/></g>
          <g stroke="#e05c20"><path d="M677.500 298v88.500h73V298M679.500 549v110M678 608.500h68.500v7H678M678 623.500h68.500v7H678"/></g>
          <g stroke="#0dd"><path d="M691.500 395.500h144M691.500 404.500h144M690 581.500h134M690 656.500h128"/><path d="M691.500 298v106M746 615.500h84M746 623.500h84" stroke-dasharray="7 2"/><path d="M680 615.500h66M680 623.500h66" stroke="#4a8080" stroke-dasharray="5 3"/></g>
          <g stroke="#d810d8"><path d="M691.500 404.500h96v10h-96zM739.500 404v10M690.500 565.500H740l47 36v37l-47 35H690.500zM690 591.500h50l47 10M690 646.500h50l47-8"/></g>
          <path d="M702 608h4v23h-4zM724 608h4v23h-4z" fill="#ffa080"/>
          <path stroke="#999" d="M694 308.500h14M724 308.500h14M693 334.500h14M723 334.500h14M692 362.500h14M722 362.500h14M701.500 299v18M731.500 299v18M700.500 325v18M730.500 325v18M699.500 353v18M729.500 353v18"/>
          <path fill="red" d="M701 302l4 6-4 7-4-7zM731 302l4 6-4 7-4-7zM700 327l4 7-4 7-4-7zM730 327l4 7-4 7-4-7zM699 355l4 7-4 7-4-7zM729 355l4 7-4 7-4-7z"/>
          <g stroke="#e8e8e8"><path d="M472 368.500h53l67 36M696 298l105 171h47M761 298l-19 37M687 417l114 52M466 526.500h53l68 82M519 526.500l45 105M848 547.500h-26l-98 24M822 547.500l-65 55"/>
          <circle cx="481" cy="353" r="13"/><circle cx="508" cy="353" r="13"/><circle cx="811" cy="455" r="13"/><circle cx="837" cy="456" r="13"/><circle cx="476" cy="512" r="13"/><circle cx="502" cy="513" r="13"/><circle cx="835" cy="533" r="13"/></g>
          <g class="tag"><text x="482" y="360">5</text><text x="508" y="360">6</text><text x="811" y="462">7</text><text x="837" y="463">8</text><text x="476" y="519">11</text><text x="502" y="520">12</text><text x="836" y="540">9</text></g>
        </svg>
        <input type="text" aria-label="尺寸1" value="44" style="left:331px;top:-8px">
        <input type="text" aria-label="尺寸2" value="10" style="left:20px;top:76px">
        <input type="text" aria-label="尺寸3" value="26" style="left:211px;top:151px">
        <input type="text" aria-label="尺寸4" value="7" style="left:352px;top:179px">
        <input type="text" aria-label="尺寸5" value="95" style="left:235px;top:208px">
        <input type="text" aria-label="尺寸6" value="10" style="left:10px;top:238px">
        <input type="text" aria-label="尺寸7" value="20" style="left:372px;top:255px">
        <input type="text" aria-label="尺寸8" value="50" style="left:364px;top:285px">
        <input type="text" aria-label="尺寸9" value="100" style="left:364px;top:318px">
        <input type="text" aria-label="尺寸10" value="80" style="left:361px;top:352px">
        <input type="text" aria-label="尺寸11" value="10" style="left:188px;top:423px">
        <input type="text" aria-label="尺寸12" value="200" style="left:236px;top:423px">
        <input type="text" aria-label="尺寸13" value="100" style="left:293px;top:424px">
      </div>
      <div class="vbar"><b></b></div>
      <div class="hbar"><b></b></div>
    </div>
    <div class="right">
      <div class="cards"><button class="on">钢板</button><button>添加零件</button></div>
      <div class="parts">
        <div class="clip">
        <table>
          <thead><tr><th></th><th>零件名称</th><th>数量</th><th>厚度</th><th>规格</th><th>材质</th><th>归属</th><th>显示</th></tr></thead>
          <tbody>
          <tr><td>1</td><td>钢梁单剪板1</td><td>1</td><td>8</td><td>8*95*352</td><td>Q235B</td><td>主件</td><td><input type="checkbox" aria-label="显示1" checked></td></tr>
          <tr><td>2</td><td>钢梁单剪板2</td><td>1</td><td>8</td><td>8*95*352</td><td>Q235B</td><td>主件</td><td><input type="checkbox" aria-label="显示2" checked></td></tr>
          <tr><td>3</td><td>梁上翼缘柱身...</td><td>1</td><td>10</td><td>10*169*312</td><td>Q235B</td><td>主件</td><td><input type="checkbox" aria-label="显示3" checked></td></tr>
          <tr><td>4</td><td>梁上翼缘柱身...</td><td>1</td><td>10</td><td>10*169*312</td><td>Q235B</td><td>主件</td><td><input type="checkbox" aria-label="显示4" checked></td></tr>
          <tr><td>5</td><td>梁下翼缘柱身...</td><td>1</td><td>10</td><td>10*169*312</td><td>Q235B</td><td>主件</td><td><input type="checkbox" aria-label="显示5" checked></td></tr>
          <tr><td>6</td><td>梁下翼缘柱身...</td><td>1</td><td>10</td><td>10*169*312</td><td>Q235B</td><td>主件</td><td><input type="checkbox" aria-label="显示6" checked></td></tr>
          <tr><td>7</td><td>焊接衬板1</td><td>1</td><td>7</td><td>7*26*200</td><td>Q235B</td><td>次件</td><td><input type="checkbox" aria-label="显示7" checked></td></tr>
          <tr><td>8</td><td>焊接衬板2</td><td>1</td><td>7</td><td>7*26*200</td><td>Q235B</td><td>次件</td><td><input type="checkbox" aria-label="显示8" checked></td></tr>
          <tr><td></td><td>梁上翼缘加强...</td><td></td><td></td><td></td><td></td><td>主件</td><td><input type="checkbox" aria-label="显示9" checked></td></tr>
          </tbody>
        </table>
        </div>
        <div class="vbar"><b></b></div>
        <div class="hbar"><b></b></div>
      </div>
      <div class="preview">
        <h4>节点 / 细部三维预览</h4>
        <svg viewBox="872 569 571 198" preserveAspectRatio="xMinYMin slice">
          <path d="M919 569h148l6 48 20 151H989z" fill="#75339a"/>
          <path d="M919 569h4l66 199h-3zM966 569h31l9 54-27-5zM1012 739l23 6 7 23h-21z" fill="#b04eea"/>
          <path d="M979 618l27 5 6 28-67-15zM1001 704l25 8 9 32-58-18z" fill="#8e40a0"/>
          <path d="M945 636l67 15M977 726l58 18" stroke="#b050d8" stroke-width="2"/>
          <path d="M985 647l28 6 13 59-25-8z" fill="#45c1c1"/>
          <path d="M996 569h3l19 83 19 92 5 24h-3l-14-56-13-60z" fill="#b04eea"/>
          <path d="M1121 631l322 61v40L1070 653z" fill="#2a8858"/>
          <path d="M1070 653l373 79v36h-217l-162-48z" fill="#34a76c"/>
          <path d="M1064 718l162 50h-76l-88-30z" fill="#2a8858"/>
          <path d="M1070 743l86 27" stroke="#3db878" stroke-width="2"/>
          <path d="M1033 643l42 10" stroke="#34a76c" stroke-width="4"/>
          <path d="M1049 737l58 16-16 5-43-16z" fill="#c01480"/>
          <path d="M1049 649l21 5 9 65-19-5z" fill="#e29b5a"/><path d="M1070 654l9 65" stroke="#a06a3a" stroke-width="2"/>
          <g fill="#505860"><circle cx="1058" cy="655" r="2.500"/><circle cx="1061" cy="670" r="2.500"/><circle cx="1063" cy="684" r="2.500"/><circle cx="1065" cy="697" r="2.500"/><circle cx="1067" cy="709" r="2.500"/></g>
          <path d="M1032 638l50 9 32 0 12-12v5l-12 12h-32l-50-10z" fill="#c01480"/>
          <path d="M1064 616l45 8 17 11-12 12h-32l-50-9z" fill="#990f62"/>
          <g class="mark"><text font-size="24" transform="translate(1167 617) rotate(106)">G</text><text font-size="24" transform="translate(1158 629) rotate(106)">Z</text><text font-size="24" transform="translate(1153 640) rotate(106)">-</text><text font-size="28" transform="translate(1141 644) rotate(106)">1</text><text font-size="28" transform="translate(1130 655) rotate(106)">[</text><text font-size="32" transform="translate(1123 665) rotate(106)">H</text><text font-size="36" transform="translate(1105 687) rotate(106)">W</text><text font-size="50" transform="translate(1078 708) rotate(106)">3</text><text font-size="52" transform="translate(1058 729) rotate(106)">5</text><text font-size="54" transform="translate(1034 753) rotate(106)">0</text></g>
          <path d="M922 717v-12" stroke="#00f" stroke-width="4"/><path d="M917 705l5-13 5 13z" fill="#00f"/>
          <path d="M925 719l12 2" stroke="#0f0" stroke-width="4"/><path d="M936 716l13 7-14 4z" fill="#0f0"/>
          <path d="M920 721l-6 6" stroke="red" stroke-width="4"/><path d="M918 732l-8 2 2-10z" fill="red"/><path d="M919 715h6v6h-6z" stroke="#ddd"/>
          <path d="M918 682h7l-7 10h8" stroke="#00f"/><path d="M951 719l4 6 4-6M955 725v6" stroke="#0f0"/><path d="M904 730l8 11M912 730l-8 11" stroke="red"/>
        </svg>
      </div>
    </div>
  </div>
  <div class="actions"><button class="btn">重新选择</button><button class="btn primary">下一步</button><button class="btn">取消</button></div>
  <svg class="corner" viewBox="0 0 9 9"><path d="M6 0h2v2H6zM6 3h2v2H6zM3 3h2v2H3zM0 6h2v2H0zM3 6h2v2H3zM6 6h2v2H6z" fill="#666"/></svg>
</div>
</body>
</html>
```
FILE: styles.css
```css
*{box-sizing:border-box}
body{margin:0;min-height:100vh;display:flex;flex-direction:column;position:relative;background:#fafafa;color:#222;font:12px/18px "Open Sans","Noto Sans CJK SC",sans-serif;overflow-x:hidden}
button,input,select{font:inherit;color:inherit;margin:0}
button{border:0;background:none;padding:0;white-space:nowrap}
h1,h2,h3,h4,p,ul,ol{margin:0;padding:0;font:inherit;list-style:none}
table{border-collapse:separate;border-spacing:0;table-layout:fixed}
th,td{padding:0;font-weight:400;white-space:nowrap;overflow:hidden}
svg{fill:none;flex:none;display:block}
.sprite{position:absolute;width:0;height:0}
.i,.ii{width:16px;height:16px;stroke:currentColor;color:#4a5164}
.ii{width:32px;height:32px}
.b{stroke:var(--b,#1a73e8)}
.bf{fill:var(--bf,#d4e5fb)}
.bs{fill:var(--b,#1a73e8);stroke:none}
.tiny{font:700 5px "Liberation Sans",sans-serif;fill:#1a73e8;stroke:none}
.off,.off .i,.off .ii{--b:#b4b4b4;--bf:none;color:#b4b4b4}
.dd::after,.more::after,.pick::after{content:"";flex:none;border:3px solid transparent;border-top:4px solid #777;border-bottom:0}
.dd.off::after{border-top-color:#bbb}

/* title bar */
.top{display:grid;grid-template:20px 20px / 1fr auto 1fr;background:#fff;border-bottom:1px solid #e8e8e8}
.quick{display:flex;gap:10px;padding:2px 0 0 10px}
.quick button{display:flex;align-items:center;gap:6px;height:16px}
.quick .dd{gap:5px}
.quick .last{gap:10px;margin-left:-2px}
.logo{width:26px;height:32px;margin-right:9px}
.top h1{line-height:22px;white-space:nowrap}
.winbtns{display:flex;justify-content:flex-end}
.winbtns button{width:36px;display:grid;place-items:center}
.tabs{display:flex;padding-left:50px;grid-column:1/3;align-items:flex-end}
.tabs button{padding:0 13px;height:19px;line-height:19px;border-radius:10px}
.tabs .on{background:#1a8cff;color:#fff}
.user{display:flex;align-items:center;justify-content:flex-end;padding:1px 6px 0 0}
.search{display:flex;align-items:center;width:319px;height:18px;margin-right:7px;border:1px solid #dcdcdc;border-radius:3px;padding:0 4px}
.search input,.lookup input{flex:1;min-width:0;border:0;padding:0;background:none;outline:0}
.search input{height:16px}
::placeholder{color:#8c8c8c;opacity:1}
.search .i,.lookup .i{color:#aaa}
.avatar{width:16px;height:16px}
.hs{margin:0 8px 0 17px}
.sh{margin:0 6px 0 7px}

/* ribbon */
.ribbon{display:flex;height:99px;background:#fff;border-bottom:1px solid #d6d6d6}
.group{display:flex;flex-direction:column;border-right:1px solid #dedede;margin:2px 0 3px}
.body{display:grid;gap:3px;height:70px;padding:1px 0 0 8px}
.col{display:grid;grid-template-rows:23px 23px 23px}
.group h2{display:flex;justify-content:center;align-items:center;gap:6px;padding-top:3px;height:24px}
.group h2:not(.dd){padding-top:6px}
.tool{display:flex;align-items:center;gap:4px}
.tool.dd::after{margin-left:3px}
.big{display:flex;flex-direction:column;align-items:center;margin-top:2px;padding-top:1px;height:67px;gap:3px;line-height:18px}
.more::after{margin-top:-4px}
.big.on{background:#c2d9f3;border-radius:4px}
.g1{width:134px}.g1 .body{grid-template-columns:40px auto}
.g2{width:246px}.g2 .body{grid-template-columns:50px 76px auto;padding-left:6px}
.g3{width:312px}.g3 .body{grid-template-columns:83px 100px auto}
.g4{width:154px}.g4 .body{grid-template-columns:20px 29px auto}
.g5{width:66px}.g5 .body{grid-template-columns:20px auto}
.g6{width:161px}.g6 .body{grid-template-columns:55px auto}
.g7{width:265px}.g7 .body{grid-template-columns:56px 49px auto;padding-left:6px}
.g4 .tool.dd::after,.g5 .tool.dd::after{margin-left:0}

/* filter row */
.filters{display:flex;gap:3px;height:26px;padding:1px 2px 2px;background:#f0f0f0}
.pick{position:relative;width:99px;height:23px}
.pick select{width:100%;height:100%;appearance:none;border:1px solid #d8d8d8;border-radius:3px;background:#fff;padding:0 3px}
.pick::after{position:absolute;right:5px;top:10px}

/* work area */
.work{flex:1;display:flex;gap:4px}
.panel{background:#fff;border:1px solid #d4d4d4}
.grip{display:flex;justify-content:flex-end;align-items:center;height:11px;background:#e6e6e6;border-bottom:1px solid #d4d4d4}
.grip .i{color:#888}
.nav{width:205px}
.panel h3{height:22px;line-height:22px;padding-left:8px;background:#f0f0f0;border-bottom:1px solid #d4d4d4;color:#777}
.navbar{display:flex;gap:4px;height:28px;padding:3px 1px;border-bottom:1px solid #dcdcdc}
.navbar button{width:24px;height:22px;display:grid;place-items:center;border-radius:3px}
.navbar .on{background:#c2d9f3}
.types{display:grid;grid-auto-rows:25px;gap:3px;padding-top:4px}
.types li{display:flex;align-items:center;gap:14px;padding-left:17px;line-height:25px}
.types .cat{background:#ececec;padding-left:3px}
.types .on{background:#d2e6fd}
.n{width:18px;height:18px;stroke:#4a9af0}
.n .g{stroke:#ccc}.n .d{stroke:#1a73e8}
.side{display:flex;flex-direction:column;gap:4px;width:239px}
.list{height:426px}
.props{flex:1}
.subtabs{display:flex;height:23px;background:#f0f0f0;border-bottom:1px solid #dcdcdc}
.list .subtabs{height:24px}
.subtabs button{padding:0 9px;background:#dedede;color:#777}
.subtabs .on{background:#f6f6f6;color:#222;font-weight:700;padding:0 8px}
.bar{display:flex;align-items:center;gap:8px;height:28px;padding-left:4px;border-bottom:1px solid #dcdcdc}
.bar .tool.dd::after{margin-left:3px;border-top-color:#999}
.over{margin-left:auto;font-size:10px;color:#4a5164;border:1px solid #e2e2e2;border-radius:2px}
.lookup{display:flex;align-items:center;height:19px;padding:0 4px 0 2px;border-bottom:1px solid #dcdcdc}
.tree{padding:4px 0 0 13px}
.parent{display:flex;align-items:center;gap:4px;height:20px}
.parent::before{content:"";border:3px solid transparent;border-top:4px solid #777;border-bottom:0}
.tree ul{padding:3px 0 0 27px}
.chip{display:inline-block;height:21px;line-height:21px;padding:0 7px 0 4px;background:#c2d9f3;border-radius:3px}
.ptable{width:100%}
.ptable th,.ptable td{height:21px;text-align:center;border-right:1px solid #dcdcdc;border-bottom:1px solid #dcdcdc}
.ptable th:nth-child(1){width:22px}.ptable th:nth-child(2){width:81px}

/* model view */
.view{flex:1;position:relative;background:#222930;overflow:hidden;display:flex;flex-direction:column;justify-content:flex-end}
.hint{display:flex;align-items:center;justify-content:center;gap:3px;height:26px;background:#343434;color:#fff;font-weight:700}
.hint .i{color:#fff}
.axes{position:absolute;inset:0;width:100%;height:100%;pointer-events:none}
.num{font:17px "Liberation Sans",sans-serif;fill:#777;text-anchor:middle}
.strip{position:absolute;right:1px;top:1px;width:32px;height:216px;padding-top:11px;background:#fff;border-radius:3px;display:flex;flex-direction:column;align-items:center;gap:7px;stroke:#4a5164}
.strip svg{width:22px;height:22px}
.strip .wide{width:24px;height:24px;margin-top:-3px}
.strip i{border:4px solid transparent;border-top:4px solid #4a5164;border-bottom:0;margin:0 0 -1px}
.strip hr{width:23px;margin:-1px 0;border:0;border-top:1px solid #555}
.strip .blue{stroke:#1a73e8;background:linear-gradient(#d4e5fb,#d4e5fb) 2px 6px / 14px 14px no-repeat}
.td{font:700 7px "Open Sans",sans-serif;fill:#1a73e8;stroke:none}
.split{position:absolute;right:0;top:372px;width:4px;height:100px;line-height:100px;background:#5c6674;color:#ccc;font-size:8px;overflow:hidden}

/* display settings */
.display{width:237px;display:flex;flex-direction:column;padding-bottom:6px}
.cards{display:flex;align-items:flex-end;gap:4px}
.cards button{background:#dcdcdc;border-radius:4px 4px 0 0;color:#444}
.cards .on{background:#fff;border:1px solid #ccc;border-bottom:0;color:#1a73e8}
.display .cards{height:27px;padding-left:3px;border-bottom:1px solid #dcdcdc}
.display .cards button{height:21px;width:60px}
.display .cards .on{height:23px;width:61px;margin-bottom:-1px}
.frame{display:grid;grid-template:1fr 16px / 1fr 14px;margin:2px 3px 6px;border:1px solid #dcdcdc;height:740px}
.clip{overflow:hidden}
.frame .clip{width:214px}
.dtable{width:226px}
.dtable th,.dtable td{height:21px;line-height:20px;border-right:1px solid #dcdcdc;border-bottom:1px solid #dcdcdc}
.dtable th:nth-child(1){width:100px}.dtable th:nth-child(2){width:63px}
.dtable .hl{background:#7db8f8;color:#fff;font-weight:700;border:1px solid #5a9fe8}
.dtable td:first-child{padding-left:40px;background:linear-gradient(#dcdcdc,#dcdcdc) 7px 0 / 1px 21px no-repeat,linear-gradient(#dcdcdc,#dcdcdc) 17px 0 / 1px 21px no-repeat,linear-gradient(#dcdcdc,#dcdcdc) 17px 10px / 17px 1px no-repeat}
.dtable .last td:first-child{background-size:1px 21px,1px 10px,17px 1px}
.dtable .head td:first-child{padding-left:11px;background:linear-gradient(#dcdcdc,#dcdcdc) 7px 0 / 1px 21px no-repeat}
.dtable .tail td:first-child{background-position:-2px 0,17px 0,17px 10px}
.head button{width:13px;height:13px;margin-right:6px;border:1px solid #777;border-radius:2px;line-height:10px;vertical-align:1px}
input[type=checkbox]{appearance:none;width:14px;height:14px;margin:2px auto 4px;display:block;border:1px solid #888;border-radius:2px;background:#fff;position:relative}
input[type=checkbox]:disabled{background:#eee;border-color:#aaa}
input[type=checkbox]:checked{background:#2a7de1;border-color:#2a7de1}
input[type=checkbox]:checked::after{content:"";position:absolute;left:4px;top:1px;width:4px;height:8px;border:solid #fff;border-width:0 2px 2px 0;transform:rotate(45deg)}
.vbar b,.hbar b{display:block;background:#cbcbcb;border-radius:4px}
.vbar b{width:8px}.hbar b{height:8px}
.frame .vbar{padding:387px 0 0 3px}.frame .vbar b{height:323px}
.hbar{display:flex;align-items:center;grid-column:1/3}
.frame .hbar{padding:0 16px 0 2px;gap:3px;color:#4a5164}
.frame .hbar b{width:124px;margin-right:auto}
.frame .hbar span{width:9px}
.btn{width:80px;height:26px;border:1px solid #c8c8c8;border-radius:4px;background:#fff}
.reset{align-self:flex-end;width:90px;margin-right:8px}

/* status bar */
.status{display:flex;align-items:center;height:33px;padding:0 0 2px 2px;background:#fbfbfb}
.s1{width:90px}.s2,.s3,.s4{width:110px}
.snaps{display:flex;gap:4px}
.snaps button{display:flex;align-items:center;justify-content:center;gap:5px;width:24px;height:25px;border:1px solid #a0a0a0;border-radius:3px;background:#fff}
.snaps .dd{width:35px}
.snaps .on{background:#d4e5fb;border-color:#4a90e2}
.status .pick{margin-left:4px;height:25px}
.status .pick select{border-color:#bbb}

/* taskbar */
.taskbar{display:flex;height:39px;border-top:1px solid #123a5c;background:linear-gradient(#ffffff55,#ffffff00 4px),radial-gradient(ellipse 260px 30px at 660px 40px,#8cd0f099,#8cd0f000),linear-gradient(75deg,#ffffff00 1000px,#ffffff30 1080px,#ffffff00 1240px),linear-gradient(90deg,#1d5f8f,#1f6594 60px,#409fd0 260px,#46a6d6 600px,#3596d0 900px,#2678bc 1150px,#1f68ae 1490px,#174a80 1530px,#1d4f86 1800px,#1a4170)}
.orb{width:38px;margin-left:7px}
.orb svg{width:38px;height:38px}
.dots{width:9px;margin:3px 9px 3px 13px;background:radial-gradient(circle,#0b2f4d 1px,#0000 1px) 0 0 / 3px 4px}
.task{width:58px;height:38px;margin-right:4px;display:grid;place-items:center;border:1px solid #12405f;border-radius:3px;background:linear-gradient(120deg,#b4d6e8bb,#4a8eb8bb);box-shadow:inset 0 0 0 1px #c7e2f0aa}
.task.on{background:linear-gradient(120deg,#e2f2f9,#9fc6da)}
.task svg{width:32px;height:34px}
.tray{display:flex;align-items:center;gap:8px;margin-left:auto;color:#fff}
.tray svg{width:16px;height:16px}
.tray .near{margin-left:-2px}
.tray .dots{height:32px;margin:0 2px 0 0}
.q{font:700 11px "Open Sans",sans-serif;fill:#fff}
time{width:74px;margin:0 4px 0 0;text-align:center;line-height:18px}
.peek{align-self:stretch;width:14px;margin-left:4px;border:1px solid #7f9db8;background:#2d5580}

/* dialog */
.dialog{position:absolute;left:442px;top:220px;width:1018px;height:595px;background:#fff;border:1px solid #b4b4b4;box-shadow:0 0 12px 2px #0009;display:flex;flex-direction:column;padding:0 9px 0 10px}
.dtitle{display:flex;justify-content:space-between;align-items:center;height:38px;padding-left:1px;font-size:14px}
.dtitle button{margin-right:1px}
.dtitle .i{color:#777}
.steps{display:flex;align-items:center;height:27px}
.steps li{display:flex;align-items:center;width:200px}
.steps li+li{width:201px}
.steps b{width:26px;height:26px;line-height:24px;margin-right:7px;border:1px solid #bbb;border-radius:50%;text-align:center;font-weight:400;font-size:13px}
.steps .on b{background:#0a84e0;border-color:#0a84e0;color:#fff}
.steps li:not(:last-child)::after{content:"";flex:1;height:2px;margin:0 9px;background:#8ec0f0}
.cols{display:flex;gap:5px;margin-left:3px;height:480px;padding-top:8px}
.cadbox{width:407px;height:471px;margin-top:3px;border:1px solid #7c8090;display:grid;grid-template:455px 1fr / 391px 1fr}
.cad{position:relative;overflow:hidden;background:#000}
.cad svg{width:391px;height:455px}
.cad input{position:absolute;width:45px;height:25px;border:1px solid #ccc;border-radius:3px;background:#fff;padding:0 3px 1px;font-size:13px}
.tag{font:20px "Liberation Serif",serif;fill:#fff;text-anchor:middle}
.cadbox .vbar{padding:112px 0 0 3px}.cadbox .vbar b{height:329px}
.cadbox .hbar b{width:308px;margin-left:14px}
.right{flex:1;display:flex;flex-direction:column}
.right .cards{height:26px}
.right .cards .on{width:69px;height:25px}
.right .cards button{width:58px;height:21px}
.parts{display:grid;grid-template:195px 1fr / 564px 1fr;height:213px;border:2px solid #c4c4c4}
.parts table{width:589px}
.parts th,.parts td{height:21px;line-height:20px;border-right:1px solid #d0d0d0;border-bottom:1px solid #d0d0d0;padding-left:3px}
.parts th{background:#eee;padding:0}
.parts th:nth-child(1){width:20px}.parts th:nth-child(2){width:95px}.parts th:nth-child(3),.parts th:nth-child(4){width:64px}.parts th:nth-child(5){width:159px}.parts th:nth-child(6){width:71px}.parts th:nth-child(7){width:67px}
.parts th:last-child{text-align:left;padding-left:6px}
.parts td:first-child{text-align:center;padding:0}
.parts td:last-child input{margin-left:4px}
.parts .vbar{padding:14px 0 0 3px}.parts .vbar b{height:111px}
.parts .hbar b{width:469px;margin-left:13px}
.preview{display:flex;flex-direction:column;height:224px;margin-top:12px;padding:6px 6px 0 3px;border:1px solid #c4c8cc}
.preview h4{line-height:18px}
.preview svg{width:100%;flex:1;min-height:0;background:#000}
.mark{font-family:"Open Sans",sans-serif;fill:#dcd8d0;text-anchor:middle}
.actions{display:flex;justify-content:flex-end;gap:6px;padding:12px 1px 0 0}
.primary{background:#2a7de1;border-color:#2a7de1;color:#fff}
.corner{position:absolute;right:3px;bottom:3px;width:9px;height:9px}
```
